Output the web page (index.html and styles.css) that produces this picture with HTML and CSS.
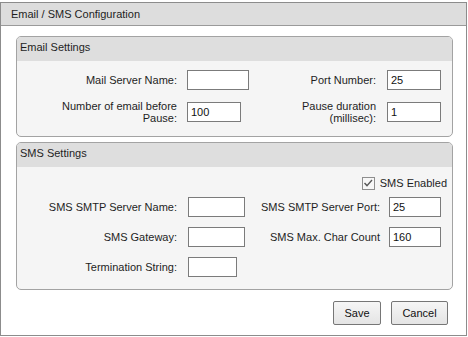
FILE: index.html
```
<!DOCTYPE html>
<html>
<head>
<meta charset="utf-8">
<link rel="stylesheet" href="styles.css">
</head>
<body>
<div class="dialog">
  <div class="titlebar">Email / SMS Configuration</div>
  <section class="panel panel-email">
    <div class="panel-head">Email Settings</div>
    <div class="panel-body email-grid">
      <label class="lbl lbl-a">Mail Server Name:</label>
      <input class="field" type="text" value="">
      <label class="lbl lbl-b">Port Number:</label>
      <input class="field" type="text" value="25">
      <label class="lbl lbl-a">Number of email before<br>Pause:</label>
      <input class="field field-short" type="text" value="100">
      <label class="lbl lbl-b">Pause duration<br>(millisec):</label>
      <input class="field" type="text" value="1">
    </div>
  </section>
  <section class="panel panel-sms">
    <div class="panel-head">SMS Settings</div>
    <div class="panel-body sms-body">
      <div class="check-row">
        <span class="checkbox"><svg width="11" height="11" viewBox="0 0 11 11"><path d="M1.5 5 L4 7.6 L9 2" fill="none" stroke="#5a5a5a" stroke-width="1.4"/></svg></span>
        <span class="check-label">SMS Enabled</span>
      </div>
      <div class="sms-grid">
        <label class="lbl lbl-a">SMS SMTP Server Name:</label>
        <input class="field" type="text" value="">
        <label class="lbl lbl-b">SMS SMTP Server Port:</label>
        <input class="field" type="text" value="25">
        <label class="lbl lbl-a">SMS Gateway:</label>
        <input class="field" type="text" value="">
        <label class="lbl lbl-b">SMS Max. Char Count</label>
        <input class="field" type="text" value="160">
        <label class="lbl lbl-a">Termination String:</label>
        <input class="field field-term" type="text" value="">
      </div>
    </div>
  </section>
  <div class="actions">
    <button class="btn btn-save">Save</button>
    <button class="btn btn-cancel">Cancel</button>
  </div>
</div>
</body>
</html>
```
FILE: styles.css
```
* { box-sizing: border-box; }
html, body { margin: 0; padding: 0; background: #ffffff; }
body {
  font-family: "Liberation Sans", Arial, sans-serif;
  font-size: 11px;
  color: #1e1e1e;
}
.dialog {
  margin-top: 2px;
  width: 467px;
  height: 334px;
  border: 1px solid #8c8c8c;
  background: #ffffff;
}
.titlebar {
  height: 23px;
  line-height: 22px;
  padding-left: 10px;
  background: #dddddd;
  border-bottom: 1px solid #9a9a9a;
}
.panel {
  margin: 10px 13px 0 15px;
  border: 1px solid #a3a3a3;
  border-radius: 5px;
  background: #f5f5f5;
  overflow: hidden;
}
.panel-sms { margin-top: 5px; }
.panel-head {
  height: 24px;
  line-height: 21px;
  padding-left: 3px;
  background: #dedede;
}
.email-grid {
  display: grid;
  grid-template-columns: 170px 62px 138px 54px;
  grid-template-rows: 20px 26px;
  row-gap: 9px;
  padding: 9px 0 11px 0;
  align-items: center;
}
.lbl {
  text-align: right;
  line-height: 12px;
}
.lbl-a { padding-right: 10px; }
.email-grid .lbl-b { padding-right: 11px; }
.field {
  width: 100%;
  height: 20px;
  margin: 0;
  padding: 0 3px;
  border: 1px solid #7b7b7b;
  border-radius: 0;
  background: #ffffff;
  font-family: "Liberation Sans", Arial, sans-serif;
  font-size: 11px;
  color: #111;
  outline: none;
}
.field-short { width: 54px; }
.sms-body {
  padding: 10px 5px 12px 0;
}
.check-row {
  display: flex;
  justify-content: flex-end;
  align-items: center;
  height: 13px;
  gap: 5px;
}
.checkbox {
  width: 13px;
  height: 13px;
  border: 1px solid #8e8e8e;
  background: #f7f7f7;
  display: flex;
  align-items: center;
  justify-content: center;
}
.checkbox svg { display: block; }
.check-label { line-height: 13px; }
.sms-grid {
  margin-top: 7px;
  display: grid;
  grid-template-columns: 171px 57px 144px 52px;
  grid-auto-rows: 20px;
  row-gap: 10px;
  align-items: center;
}
.sms-grid .lbl-a { padding-right: 11px; }
.sms-grid .lbl-b { padding-right: 9px; }
.field-term { width: 49px; }
.actions {
  display: flex;
  justify-content: flex-end;
  gap: 10px;
  margin-top: 11px;
  padding-right: 18px;
}
.btn {
  height: 24px;
  padding: 0;
  border: 1px solid #767676;
  border-radius: 2px;
  background: linear-gradient(#f6f6f6, #e4e4e4);
  font-family: "Liberation Sans", Arial, sans-serif;
  font-size: 11px;
  color: #111;
}
.btn-save { width: 48px; }
.btn-cancel { width: 57px; }
```
